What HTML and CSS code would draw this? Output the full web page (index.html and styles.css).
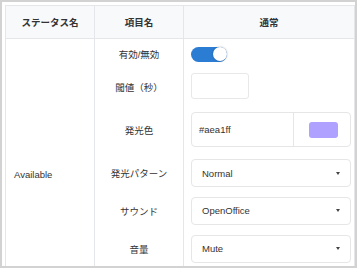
FILE: index.html
```html
<!DOCTYPE html>
<html lang="ja">

<head>
    <meta charset="UTF-8">
    <meta name="viewport" content="width=device-width, initial-scale=1.0">
    <title>ステータス設定</title>
    <link rel="stylesheet" href="styles.css">
</head>

<body>
    <!-- Frame -->
    <div class="frame">
        <table class="status-table">
            <colgroup>
                <col class="col-status">
                <col class="col-item">
                <col class="col-value">
            </colgroup>
            <thead>
                <tr>
                    <th>ステータス名</th>
                    <th>項目名</th>
                    <th>通常</th>
                </tr>
            </thead>
            <tbody>
                <tr class="row-toggle">
                    <td class="status-name" rowspan="6">Available</td>
                    <td class="item-name">有効/無効</td>
                    <td class="value">
                        <span class="switch"><span class="knob"></span></span>
                    </td>
                </tr>
                <tr class="row-threshold">
                    <td class="item-name">閾値（秒）</td>
                    <td class="value">
                        <div class="small-input"></div>
                    </td>
                </tr>
                <tr class="row-color">
                    <td class="item-name">発光色</td>
                    <td class="value">
                        <div class="color-group">
                            <span class="color-text">#aea1ff</span>
                            <span class="color-cell"><span class="swatch"></span></span>
                        </div>
                    </td>
                </tr>
                <tr class="row-pattern">
                    <td class="item-name">発光パターン</td>
                    <td class="value">
                        <div class="select">Normal<span class="caret"></span></div>
                    </td>
                </tr>
                <tr class="row-sound">
                    <td class="item-name">サウンド</td>
                    <td class="value">
                        <div class="select">OpenOffice<span class="caret"></span></div>
                    </td>
                </tr>
                <tr class="row-volume">
                    <td class="item-name">音量</td>
                    <td class="value">
                        <div class="select">Mute<span class="caret"></span></div>
                    </td>
                </tr>
            </tbody>
        </table>
    </div>
</body>

</html>
```

FILE: styles.css
```css
/* Base */
body {
    margin: 0;
    padding: 0;
    background: #ffffff;
    font-family: "Liberation Sans", "Noto Sans CJK JP", sans-serif;
    font-size: 9.5px;
    color: #333333;
}

/* Outer frame of the screenshot */
.frame {
    width: 357px;
    height: 268px;
    border: 2px solid #d2d2d2;
    padding: 3px 1px 0 3px;
    box-sizing: border-box;
    overflow: hidden;
}

/* Table */
.status-table {
    border-collapse: collapse;
    table-layout: fixed;
    width: 349px;
}

.col-status {
    width: 89px;
}

.col-item {
    width: 89px;
}

.col-value {
    width: 171px;
}

.status-table th {
    height: 32px;
    padding: 0;
    background: #f8f9fb;
    border: 1px solid #e4e6ea;
    font-weight: bold;
    text-align: center;
    vertical-align: middle;
}

.status-table td {
    padding: 0;
    border-left: 1px solid #e4e6ea;
    border-right: 1px solid #e4e6ea;
    vertical-align: middle;
}

.status-name {
    padding: 42px 0 0 8px !important;
    text-align: left;
}

.item-name {
    text-align: center;
}

.value {
    padding: 0 3px 0 7px !important;
}

.row-toggle td {
    height: 30px;
}

.row-threshold td {
    height: 36px;
}

.row-color td {
    height: 49px;
}

.row-pattern td {
    height: 38px;
}

.row-sound td {
    height: 37px;
}

.row-volume td {
    height: 39px;
}

/* Switch */
.switch {
    display: flex;
    justify-content: flex-end;
    align-items: center;
    width: 36px;
    height: 15px;
    border-radius: 8px;
    background: #2b7cd3;
}

.knob {
    width: 14px;
    height: 14px;
    border-radius: 50%;
    background: #ffffff;
    box-shadow: 0 0 2px rgba(0, 0, 0, 0.35);
}

/* Threshold input */
.small-input {
    width: 58px;
    height: 26px;
    margin-top: -3px;
    border: 1px solid #e8e8e8;
    border-radius: 3px;
    box-sizing: border-box;
}

/* Colour picker group */
.color-group {
    display: flex;
    height: 35px;
    border: 1px solid #e6e6e6;
    border-radius: 4px;
    box-sizing: border-box;
}

.color-text {
    flex: 1;
    display: flex;
    align-items: center;
    padding-left: 7px;
    border-right: 1px solid #e6e6e6;
}

.color-cell {
    width: 54px;
    display: flex;
    align-items: center;
    justify-content: center;
    padding-left: 2px;
}

.swatch {
    width: 29px;
    height: 16px;
    border-radius: 3px;
    background: #aea1ff;
}

/* Select boxes */
.select {
    display: flex;
    align-items: center;
    justify-content: space-between;
    height: 28px;
    padding: 0 10px;
    border: 1px solid #e6e6e6;
    border-radius: 4px;
    box-sizing: border-box;
}

.caret {
    width: 0;
    height: 0;
    border-left: 2.5px solid transparent;
    border-right: 2.5px solid transparent;
    border-top: 3px solid #444444;
}
```
